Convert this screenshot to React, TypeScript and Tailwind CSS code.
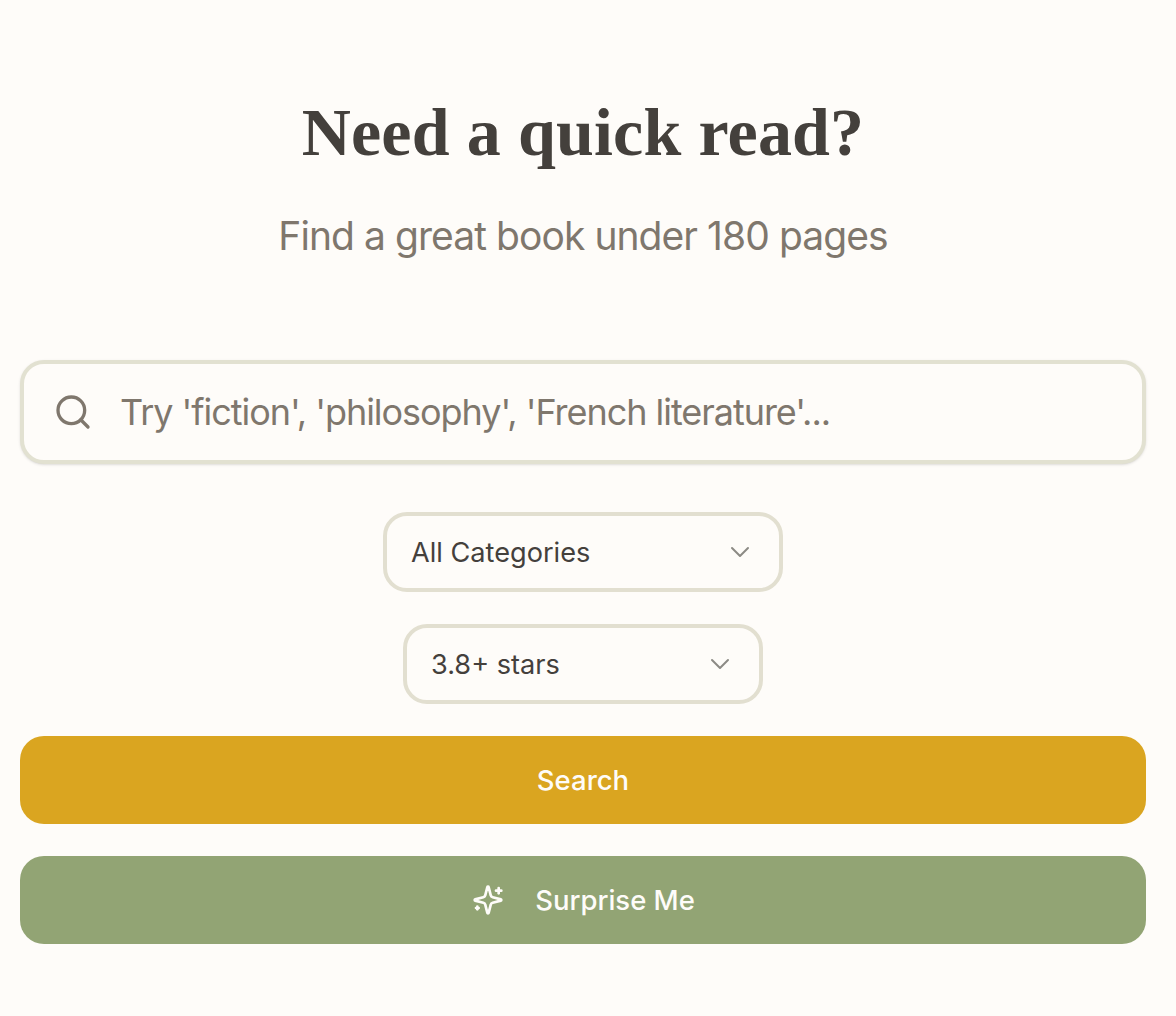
import React, { useState } from 'react';
import { Search, ChevronDown } from 'lucide-react';

const FilterSelect: React.FC<{ label: string; width: string }> = ({ label, width }) => (
  <button className={`flex h-20 items-center justify-between rounded-[24px] border-4 border-[#e2dfd0] bg-[#fefcf9] pl-6 pr-[23px] text-[27.15px] text-[#44403c] ${width}`}>
    <span className="pt-0.5">{label}</span>
    <ChevronDown className="size-8 text-[#8c8a85]" strokeWidth={1.5} />
  </button>
);

const SparkleIcon = () => (
  <svg viewBox="0 0 24 24" fill="none" stroke="currentColor" strokeWidth={2} strokeLinecap="round" strokeLinejoin="round" className="size-8">
    <path d="M9.937 15.5A2 2 0 0 0 8.5 14.063l-6.135-1.582a.5.5 0 0 1 0-.962L8.5 9.936A2 2 0 0 0 9.937 8.5l1.582-6.135a.5.5 0 0 1 .963 0L14.063 8.5A2 2 0 0 0 15.5 9.937l6.135 1.581a.5.5 0 0 1 0 .964L15.5 14.063a2 2 0 0 0-1.437 1.437l-1.582 6.135a.5.5 0 0 1-.963 0z" />
    <path d="M20 3v4" />
    <path d="M22 5h-4" />
    <path d="M4 17v2" />
    <path d="M5 18H3" />
  </svg>
);

export default function App() {
  const [query, setQuery] = useState('');

  return (
    <div className="min-h-[1016px] bg-[#fefcf9] pl-5 pr-[30px] pt-[92px] font-['Inter',sans-serif]">
      {/* Header */}
      <div className="flex flex-col items-center">
        <h1 className="font-['Liberation_Serif',serif] text-[68px] leading-[80px] font-bold tracking-[0.15px] text-[#44403c]">Need a quick read?</h1>
        <p className="mt-10 text-[39px] leading-[48px] font-normal tracking-[-0.94px] text-[#7f776d]">Find a great book under 180 pages</p>
      </div>

      {/* Search box */}
      <div className="mt-[100px] flex h-[104px] items-center rounded-[24px] border-4 border-[#e2e1d1] bg-[#fefcf9] pl-[29px] pr-8 shadow-sm">
        <Search className="size-10 shrink-0 text-[#7f776d]" strokeWidth={2} />
        <input
          type="text"
          value={query}
          onChange={(e) => setQuery(e.target.value)}
          placeholder="Try 'fiction', 'philosophy', 'French literature'..."
          className="ml-[27px] w-full bg-transparent text-[36px] font-normal tracking-[-1.04px] text-[#44403c] outline-none placeholder:text-[#7f776d]"
        />
      </div>

      {/* Filters */}
      <div className="mt-12 flex flex-col items-center gap-8">
        <FilterSelect label="All Categories" width="w-[400px]" />
        <FilterSelect label="3.8+ stars" width="w-[360px]" />
      </div>

      {/* Actions */}
      <div className="mt-8 flex flex-col gap-8">
        <button className="flex h-[88px] items-center justify-center rounded-[24px] bg-[#daa520] pt-0.5 text-[27.5px] font-[450] text-[#fefcf9]">Search</button>
        <button className="flex h-[88px] items-center justify-center gap-[31px] rounded-[24px] bg-[#92a474] pl-px text-[27.5px] font-[450] text-[#fefcf9]">
          <SparkleIcon />
          <span className="pt-0.5">Surprise Me</span>
        </button>
      </div>
    </div>
  );
}
